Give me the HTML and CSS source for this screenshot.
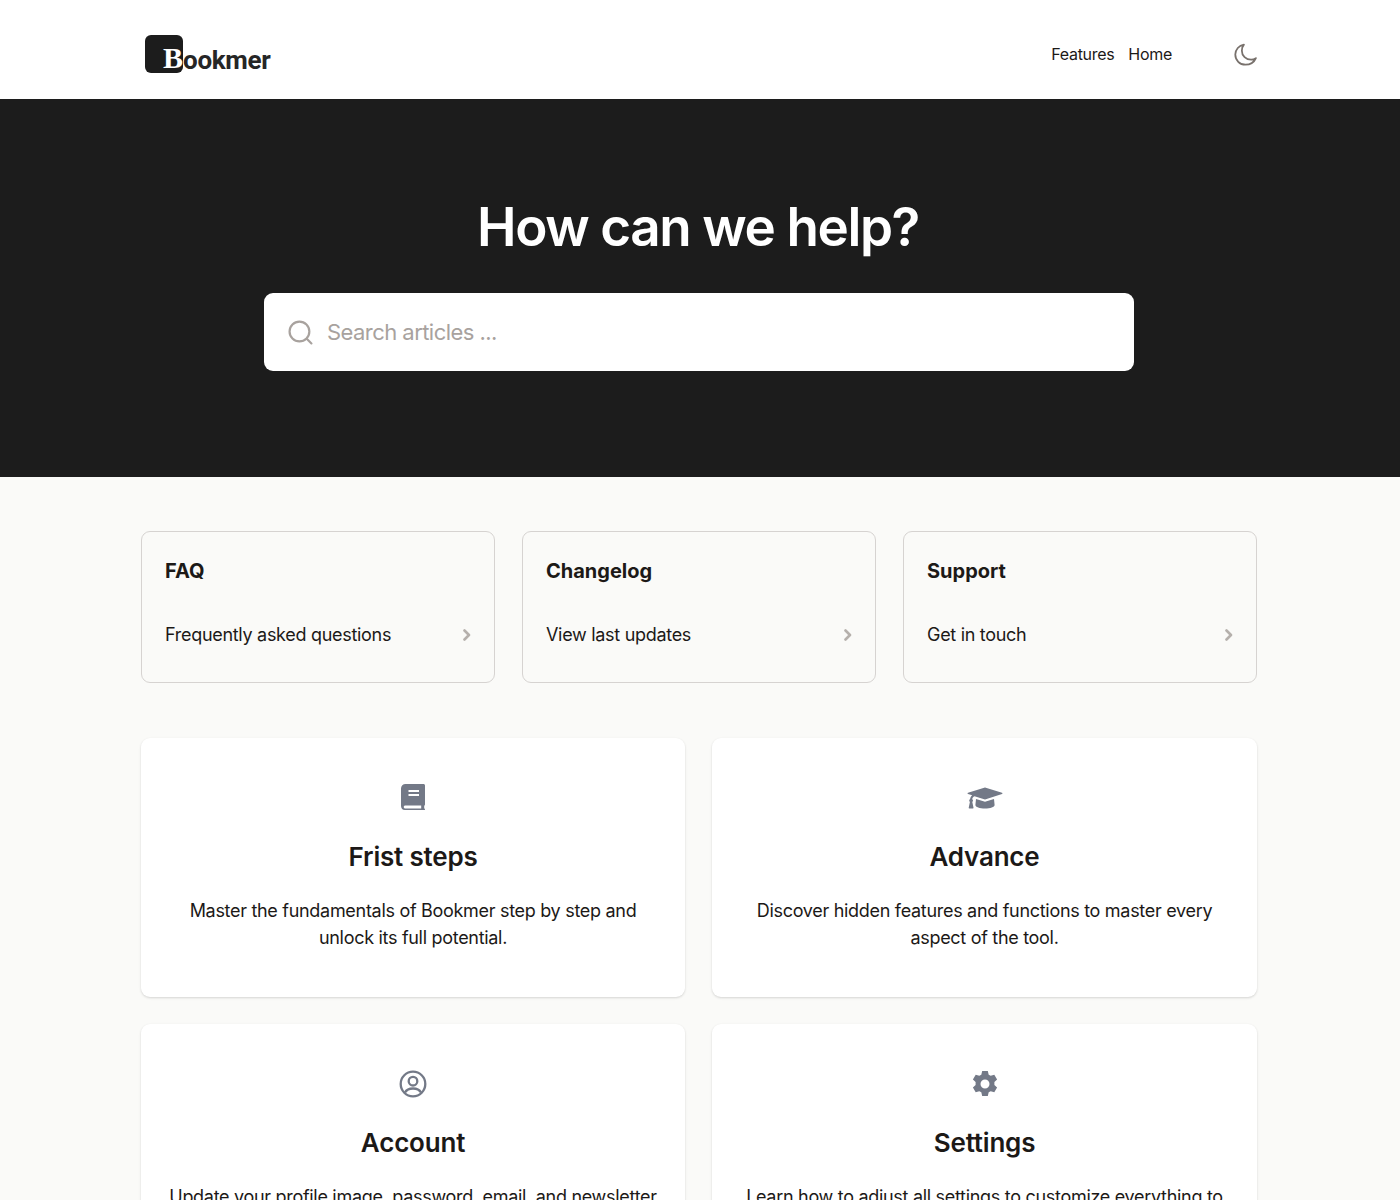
FILE: index.html
```html
<!DOCTYPE html>
<html lang="en">
<head>
<meta charset="utf-8">
<title>Bookmer Help</title>
<link rel="stylesheet" href="styles.css">
</head>
<body>
<header class="site-header">
  <a class="logo" href="#"><span class="logo-mark"><span class="logo-b">B</span></span><span class="logo-rest">ookmer</span></a>
  <nav class="nav">
    <a href="#">Features</a>
    <a href="#">Home</a>
    <svg class="moon" viewBox="0 0 24 24" fill="none" stroke="currentColor" stroke-width="1.7" stroke-linecap="round" stroke-linejoin="round"><path d="M22 15.500C20.500 16.600 19 17 17.300 17 12.500 17 8.500 13.200 8.500 8.300c0-2.200.7-4.300 2-5.800C5.800 3.300 2.200 7.300 2.200 12.100c0 5.400 4.300 9.700 9.700 9.700 4.500 0 8.500-2.600 10.100-6.300Z"/></svg>
  </nav>
</header>
<section class="hero">
  <h1>How can we help?</h1>
  <div class="search">
    <svg class="search-icon" viewBox="0 0 24 24" fill="none" stroke="currentColor" stroke-width="2.100" stroke-linecap="round"><circle cx="11" cy="11" r="9.500"/><path d="m18 18 4.500 4.500"/></svg>
    <span class="search-text">Search articles ...</span>
  </div>
</section>
<main class="content">
  <div class="links">
    <a class="link-card" href="#"><h3>FAQ</h3><div class="link-row"><span>Frequently asked questions</span><svg class="chev" viewBox="0 0 12 12" fill="none" stroke="currentColor" stroke-width="2.600" stroke-linecap="round" stroke-linejoin="round"><path d="m3.500 1.500 4.500 4.500-4.500 4.500"/></svg></div></a>
    <a class="link-card" href="#"><h3>Changelog</h3><div class="link-row"><span>View last updates</span><svg class="chev" viewBox="0 0 12 12" fill="none" stroke="currentColor" stroke-width="2.600" stroke-linecap="round" stroke-linejoin="round"><path d="m3.500 1.500 4.500 4.500-4.500 4.500"/></svg></div></a>
    <a class="link-card" href="#"><h3>Support</h3><div class="link-row"><span>Get in touch</span><svg class="chev" viewBox="0 0 12 12" fill="none" stroke="currentColor" stroke-width="2.600" stroke-linecap="round" stroke-linejoin="round"><path d="m3.500 1.500 4.500 4.500-4.500 4.500"/></svg></div></a>
  </div>
  <div class="topics">
    <article class="topic">
      <svg class="topic-icon" viewBox="0 0 28 28"><path fill="currentColor" fill-rule="evenodd" d="M6.500 1h18c.8 0 1.500.7 1.500 1.500v19c0 .6-.3 1-.8 1.200v2.800h.2c.4 0 .6.400.6.800v.2c0 .4-.3.500-.8.500H6.500C4 27.500 2 25.500 2 23V5.500C2 3 4 1 6.500 1ZM9.500 7v2h10.500V7ZM9.500 11v2h10.500v-2ZM6.500 22.500c-1.100 0-1.800.6-1.800 1.500s.7 1.500 1.800 1.500h15.700v-3Z"/></svg>
      <h2>Frist steps</h2>
      <p>Master the fundamentals of Bookmer step by step and unlock its full potential.</p>
    </article>
    <article class="topic">
      <svg class="topic-icon" viewBox="0 0 36 28"><path fill="currentColor" d="M18 4.500 35 9.800c.6.300.6 1 0 1.300L18 16.500 7.500 13.200c-1.400.6-2.100 1.600-2.300 3 .5.300.8.800.8 1.400 0 .6-.3 1.100-.7 1.400l1.200 5.800c.1.400-.2.700-.6.700H2.300c-.4 0-.7-.3-.6-.7l1.200-5.800c-.4-.3-.7-.8-.7-1.400 0-.6.300-1.200.9-1.500.2-1.600.9-3 2.100-3.900L1 11.100c-.6-.3-.6-1 0-1.300Z"/><path fill="currentColor" d="M9 16 18 18.800l9-2.800.6 6c0 2.200-4.300 3.500-9.600 3.500s-9.600-1.300-9.600-3.500Z"/></svg>
      <h2>Advance</h2>
      <p>Discover hidden features and functions to master every aspect of the tool.</p>
    </article>
    <article class="topic">
      <svg class="topic-icon" viewBox="0 -1 28 28" fill="none" stroke="currentColor" stroke-width="2.300"><circle cx="14" cy="14" r="12.300"/><circle cx="14" cy="11.200" r="4.300"/><path d="M6 22.500c1.500-2.800 4-4 8-4s6.500 1.200 8 4"/></svg>
      <h2>Account</h2>
      <p>Update your profile image, password, email, and newsletter preferences in one place.</p>
    </article>
    <article class="topic">
      <svg class="topic-icon" viewBox="0 -1 28 28"><path fill="currentColor" fill-rule="evenodd" d="M11.200 1h5.600l.9 3.700 2 1.100 3.600-1.100 2.800 4.800-2.700 2.600v2.800l2.700 2.600-2.800 4.800-3.600-1.100-2 1.100-.9 3.700h-5.600l-.9-3.700-2-1.100-3.600 1.100-2.800-4.800 2.700-2.600v-2.800L1.900 9.500l2.800-4.800 3.600 1.100 2-1.100ZM14 9.500a4.500 4.500 0 1 0 0 9 4.500 4.500 0 0 0 0-9Z"/></svg>
      <h2>Settings</h2>
      <p>Learn how to adjust all settings to customize everything to your needs and liking.</p>
    </article>
  </div>
</main>
</body>
</html>
```
FILE: styles.css
```css
* { box-sizing: border-box; }
html, body { margin: 0; height: 1200px; overflow: hidden; }
body { background: #fafaf8; color: #1c1917; font-family: Inter, "Liberation Sans", sans-serif; font-size: 18px; line-height: 27px; letter-spacing: -0.3px; }
a { color: inherit; text-decoration: none; }
h1, h2, h3, p { margin: 0; }

.site-header { height: 99px; background: #fff; padding: 0 142px 0 145px; display: flex; justify-content: space-between; align-items: center; }
.logo { display: flex; align-items: flex-end; margin-top: 9px; height: 38px; }
.logo-mark { width: 38px; height: 38px; background: #1c1c1c; border-radius: 6px; position: relative; display: block; }
.logo-b { position: absolute; right: 0; bottom: 0; font-family: "Liberation Serif", serif; font-weight: 700; font-size: 30px; line-height: 30px; color: #fff; letter-spacing: 0; }
.logo-rest { font-family: Roboto, sans-serif; font-weight: 700; font-size: 26px; line-height: 30px; letter-spacing: -0.3px; color: #262626; margin-bottom: -2px; }
.nav { display: flex; align-items: center; font-size: 16px; letter-spacing: -0.3px; margin-top: 10px; gap: 14px; }
.moon { width: 25px; height: 25px; margin-left: 47px; color: #78716c; }

.hero { height: 378px; width: 1398px; background: #1c1c1c; display: flex; flex-direction: column; align-items: center; padding-top: 92px; box-shadow: 2px 0 0 #1c1c1c; }
.hero h1 { color: #fff; font-size: 53px; line-height: 72px; font-weight: 600; letter-spacing: -1.4px; margin-right: 2px; }
.search { width: 870px; height: 78px; margin-top: 30px; background: #fff; border-radius: 9px; display: flex; align-items: center; padding-left: 24px; color: #a8a29e; }
.search-icon { width: 25px; height: 25px; }
.search-text { font-size: 22px; letter-spacing: -0.55px; margin-left: 14px; }

.content { width: 1116px; margin: 54px 0 0 141px; }
.links { display: grid; grid-template-columns: repeat(3, 1fr); gap: 27px; }
.link-card { height: 152px; border: 1px solid #d6d3d1; border-radius: 9px; padding: 24px 23px 0; display: block; }
.link-card h3 { font-size: 20px; font-weight: 700; line-height: 30px; letter-spacing: 0; }
.link-row { display: flex; justify-content: space-between; align-items: center; margin-top: 35px; }
.chev { width: 12px; height: 12px; margin-right: -2px; color: #b5b0ac; }

.topics { display: grid; grid-template-columns: 544px 545px; gap: 27px; margin-top: 55px; }
.topic { background: #fff; height: 259px; border-radius: 9px; box-shadow: 0 1px 3px rgba(0,0,0,.1), 0 1px 2px rgba(0,0,0,.06); padding: 45px 27px 0; text-align: center; }
.topic-icon { display: block; height: 28px; width: auto; margin: 0 auto; color: #737987; overflow: visible; }
.topic h2 { font-size: 26px; line-height: 36px; font-weight: 600; letter-spacing: -0.2px; margin-top: 28px; }
.topic p { margin-top: 22px; }
```
